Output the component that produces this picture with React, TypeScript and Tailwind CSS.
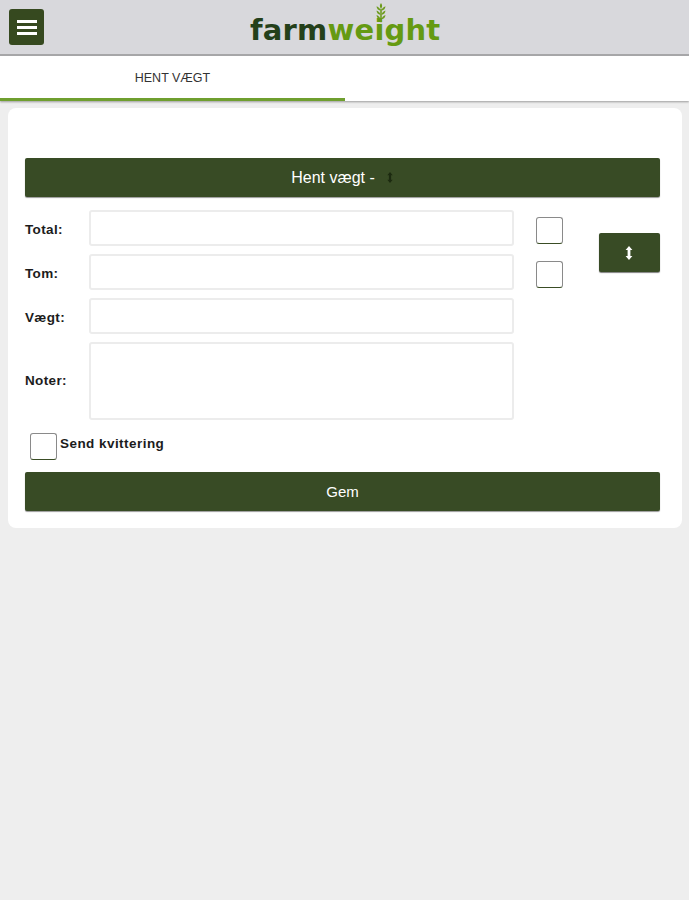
import React from "react";

function Wheat() {
  return (
    <svg className="absolute left-[124px] top-[-10px]" width="14" height="25" viewBox="0 0 14 26" fill="#6c9a1c">
      <path d="M7 0 C8.6 2 8.6 4 7 6 C5.4 4 5.4 2 7 0Z" />
      <path d="M6.4 8 C6.4 5.8 4.4 4 2.4 3.4 C2.4 5.8 4 7.5 6.4 8Z" />
      <path d="M7.6 8 C7.6 5.8 9.6 4 11.6 3.4 C11.6 5.8 10 7.5 7.6 8Z" />
      <path d="M6.4 12.5 C6.4 10.3 4.4 8.5 2.4 7.9 C2.4 10.3 4 12 6.4 12.5Z" />
      <path d="M7.6 12.5 C7.6 10.3 9.6 8.5 11.6 7.9 C11.6 10.3 10 12 7.6 12.5Z" />
      <path d="M6.4 17 C6.4 14.8 4.4 13 2.4 12.4 C2.4 14.8 4 16.5 6.4 17Z" />
      <path d="M7.6 17 C7.6 14.8 9.6 13 11.6 12.4 C11.6 14.8 10 16.5 7.6 17Z" />
      <rect x="6.2" y="6" width="1.6" height="14" />
    </svg>
  );
}

function UpDown({ color = "#ffffff", h = 16 }: { color?: string; h?: number }) {
  return (
    <svg width="8" height={h} viewBox="0 0 8 14" fill={color}>
      <path d="M4 0 L7.4 4 H5.4 V10 H7.4 L4 14 L0.6 10 H2.6 V4 H0.6Z" />
    </svg>
  );
}

function Box() {
  return <div className="w-[27px] h-[27px] bg-white rounded-[3px] border border-[#3a4d25] border-l-[#8a8a8a] border-t-[#8a8a8a] border-r-[#8a8a8a]" />;
}

function Label({ children, className = "pt-[5px]" }: { children: React.ReactNode; className?: string }) {
  return <span className={`w-[64px] shrink-0 text-[13.5px] font-bold text-[#1c1c1c] tracking-[0.35px] ${className}`}>{children}</span>;
}

function Field({ className = "h-[36px]" }: { className?: string }) {
  return <div className={`w-[425px] bg-white border-2 border-[#ececec] rounded-[3px] ${className}`} />;
}

export default function App() {
  return (
    <div className="min-h-[900px] bg-[#eeeeee] font-['Liberation_Sans',Arial,sans-serif]">
      <header className="h-[56px] bg-[#d8d8dc] border-b-2 border-[#a6a6a8] pl-[9px] flex items-center relative">
        <button className="w-[35px] h-[36px] bg-[#36491f] rounded-[3px] flex flex-col items-center justify-center gap-[3px]">
          <span className="block w-[20px] h-[3px] bg-white" />
          <span className="block w-[20px] h-[3px] bg-white" />
          <span className="block w-[20px] h-[3px] bg-white" />
        </button>
        <div className="absolute left-[250px] top-[13px] text-[29px] leading-[34px] font-bold font-['DejaVu_Sans',sans-serif] tracking-[0.2px] whitespace-nowrap">
          <span className="text-[#24401a]">farm</span>
          <span className="text-[#659a12]">weight</span>
          <Wheat />
        </div>
      </header>

      <nav className="h-[45px] bg-white shadow-[0_1px_2px_rgba(0,0,0,0.35)] flex">
        <div className="w-[345px] h-full border-b-[3px] border-[#6f9f2f] flex items-center justify-center text-[12.5px] text-[#333333] pt-[2px]">
          HENT VÆGT
        </div>
      </nav>

      <main className="px-[8px] pt-[7px]">
        <section className="w-[674px] h-[420px] bg-white rounded-[8px] px-[17px] pt-[50px]">
          <button className="w-[635px] h-[39px] bg-[#384b25] rounded-[2px] text-white text-[16px] flex items-center justify-center gap-[11px] shadow-[0_1px_1px_rgba(0,0,0,0.4)]">
            <span>Hent vægt -</span>
            <UpDown color="#1c2a10" h={11} />
          </button>

          <div className="flex mt-[13px]">
            <div className="flex flex-col gap-[8px]">
              <div className="flex items-center"><Label>Total:</Label><Field /></div>
              <div className="flex items-center"><Label>Tom:</Label><Field /></div>
              <div className="flex items-center"><Label>Vægt:</Label><Field /></div>
              <div className="flex items-center"><Label className="pt-0">Noter:</Label><Field className="h-[78px]" /></div>
            </div>
            <div className="flex flex-col gap-[17px] ml-[22px] pt-[7px]">
              <Box />
              <Box />
            </div>
            <button className="w-[61px] h-[39px] ml-[36px] mt-[23px] bg-[#384b25] rounded-[2px] flex items-center justify-center pr-[2px] shadow-[0_1px_1px_rgba(0,0,0,0.5)]">
              <UpDown />
            </button>
          </div>

          <div className="flex items-start mt-[13px] ml-[5px]">
            <Box />
            <span className="ml-[3px] pt-[1px] text-[13.5px] leading-[20px] font-bold text-[#1c1c1c] tracking-[0.45px]">Send kvittering</span>
          </div>

          <button className="w-[635px] h-[39px] mt-[12px] pt-[2px] bg-[#384b25] rounded-[2px] text-white text-[15px] flex items-center justify-center shadow-[0_1px_1px_rgba(0,0,0,0.4)]">
            Gem
          </button>
        </section>
      </main>
    </div>
  );
}
